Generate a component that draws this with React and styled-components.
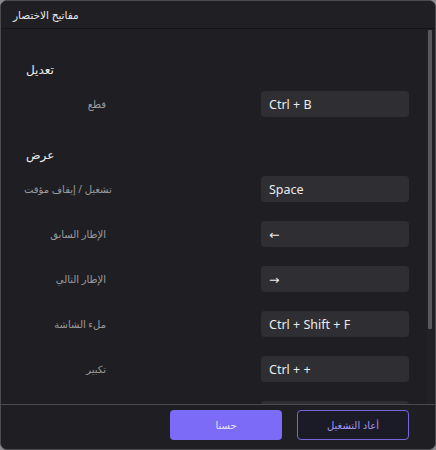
import React from 'react';
import styled, { createGlobalStyle } from 'styled-components';

const sections = [
    {
        title: 'تعديل',
        items: [{ label: 'قطع', keys: 'Ctrl + B' }],
    },
    {
        title: 'عرض',
        items: [
            { label: 'تشغيل / إيقاف مؤقت', keys: 'Space' },
            { label: 'الإطار السابق', keys: '←' },
            { label: 'الإطار التالي', keys: '→' },
            { label: 'ملء الشاشة', keys: 'Ctrl + Shift + F' },
            { label: 'تكبير', keys: 'Ctrl + +' },
            { label: 'تصغير', keys: 'Ctrl + -' },
            { label: 'ملاءمة الشاشة', keys: 'Ctrl + 0' },
        ],
    },
];

const App = () => {
    return (
        <>
            <GlobalStyle />
            <Window>
                <TitleBar>مفاتيح الاختصار</TitleBar>
                <BodyWrap>
                    <Body>
                        {sections.map((section) => (
                            <Section key={section.title}>
                                <SectionTitle>{section.title}</SectionTitle>
                                <Rows>
                                    {section.items.map((item) => (
                                        <Row key={item.label}>
                                            <Label>{item.label}</Label>
                                            <KeyBox>{item.keys}</KeyBox>
                                        </Row>
                                    ))}
                                </Rows>
                            </Section>
                        ))}
                    </Body>
                    <ScrollTrack>
                        <ScrollThumb style={{ height: 299 }} />
                    </ScrollTrack>
                </BodyWrap>
                <Footer>
                    <Button primary>حسنا</Button>
                    <Button>أعاد التشغيل</Button>
                </Footer>
            </Window>
        </>
    );
};

export default App;

const GlobalStyle = createGlobalStyle`
    html, body {
        margin: 0;
        padding: 0;
        background: #8a8a8e;
    }
    * {
        box-sizing: border-box;
    }
`;

const Window = styled.div`
    width: 436px;
    height: 450px;
    display: flex;
    flex-direction: column;
    background: #1f1f23;
    border: 1px solid #4b4b50;
    border-radius: 7px;
    overflow: hidden;
    font-family: "Noto Sans", "DejaVu Sans", sans-serif;
`;

const TitleBar = styled.div`
    height: 28px;
    flex-shrink: 0;
    padding: 0 12px;
    display: flex;
    align-items: center;
    color: #e6e6e6;
    font-size: 10.5px;
    background: #202024;
    border-bottom: 1px solid #141416;
`;

const BodyWrap = styled.div`
    position: relative;
    flex: 1;
    min-height: 0;
`;

const Body = styled.div`
    height: 100%;
    overflow: hidden;
    padding: 31px 26px 28px 23px;
`;

const ScrollTrack = styled.div`
    position: absolute;
    top: 0;
    right: 2px;
    bottom: 0;
    width: 6px;
    padding: 1px 1px 0;
    background: #222226;
`;

const ScrollThumb = styled.div`
    width: 4px;
    background: #58585d;
    border-radius: 1px;
`;

const Section = styled.div`
    & + & {
        margin-top: 28px;
    }
`;

const SectionTitle = styled.div`
    height: 20px;
    line-height: 20px;
    margin-bottom: 11px;
    padding-left: 2px;
    color: #ececec;
    font-size: 12px;
`;

const Rows = styled.div`
    display: flex;
    flex-direction: column;
    gap: 19px;
`;

const Row = styled.div`
    display: flex;
    align-items: center;
    justify-content: space-between;
`;

const Label = styled.div`
    width: 82px;
    text-align: right;
    white-space: nowrap;
    color: #9b9b9f;
    font-size: 10px;
`;

const KeyBox = styled.div`
    width: 148px;
    height: 26px;
    padding: 0 8px;
    display: flex;
    align-items: center;
    background: #2e2e33;
    border-radius: 4px;
    color: #ebebeb;
    font-size: 12.5px;
`;

const Footer = styled.div`
    flex-shrink: 0;
    height: 45px;
    padding: 5px 26px 0;
    display: flex;
    align-items: flex-start;
    justify-content: flex-end;
    gap: 15px;
    border-top: 1px solid #4a4a4f;
`;

const Button = styled.button`
    width: 112px;
    height: 30px;
    border-radius: 4px;
    font-family: inherit;
    font-size: 10px;
    cursor: pointer;
    background: ${(p) => (p.primary ? '#7b6bf6' : '#1b1a27')};
    color: ${(p) => (p.primary ? '#e4e0ff' : '#a498f3')};
    border: ${(p) => (p.primary ? 'none' : '1.5px solid #7568dc')};
`;
